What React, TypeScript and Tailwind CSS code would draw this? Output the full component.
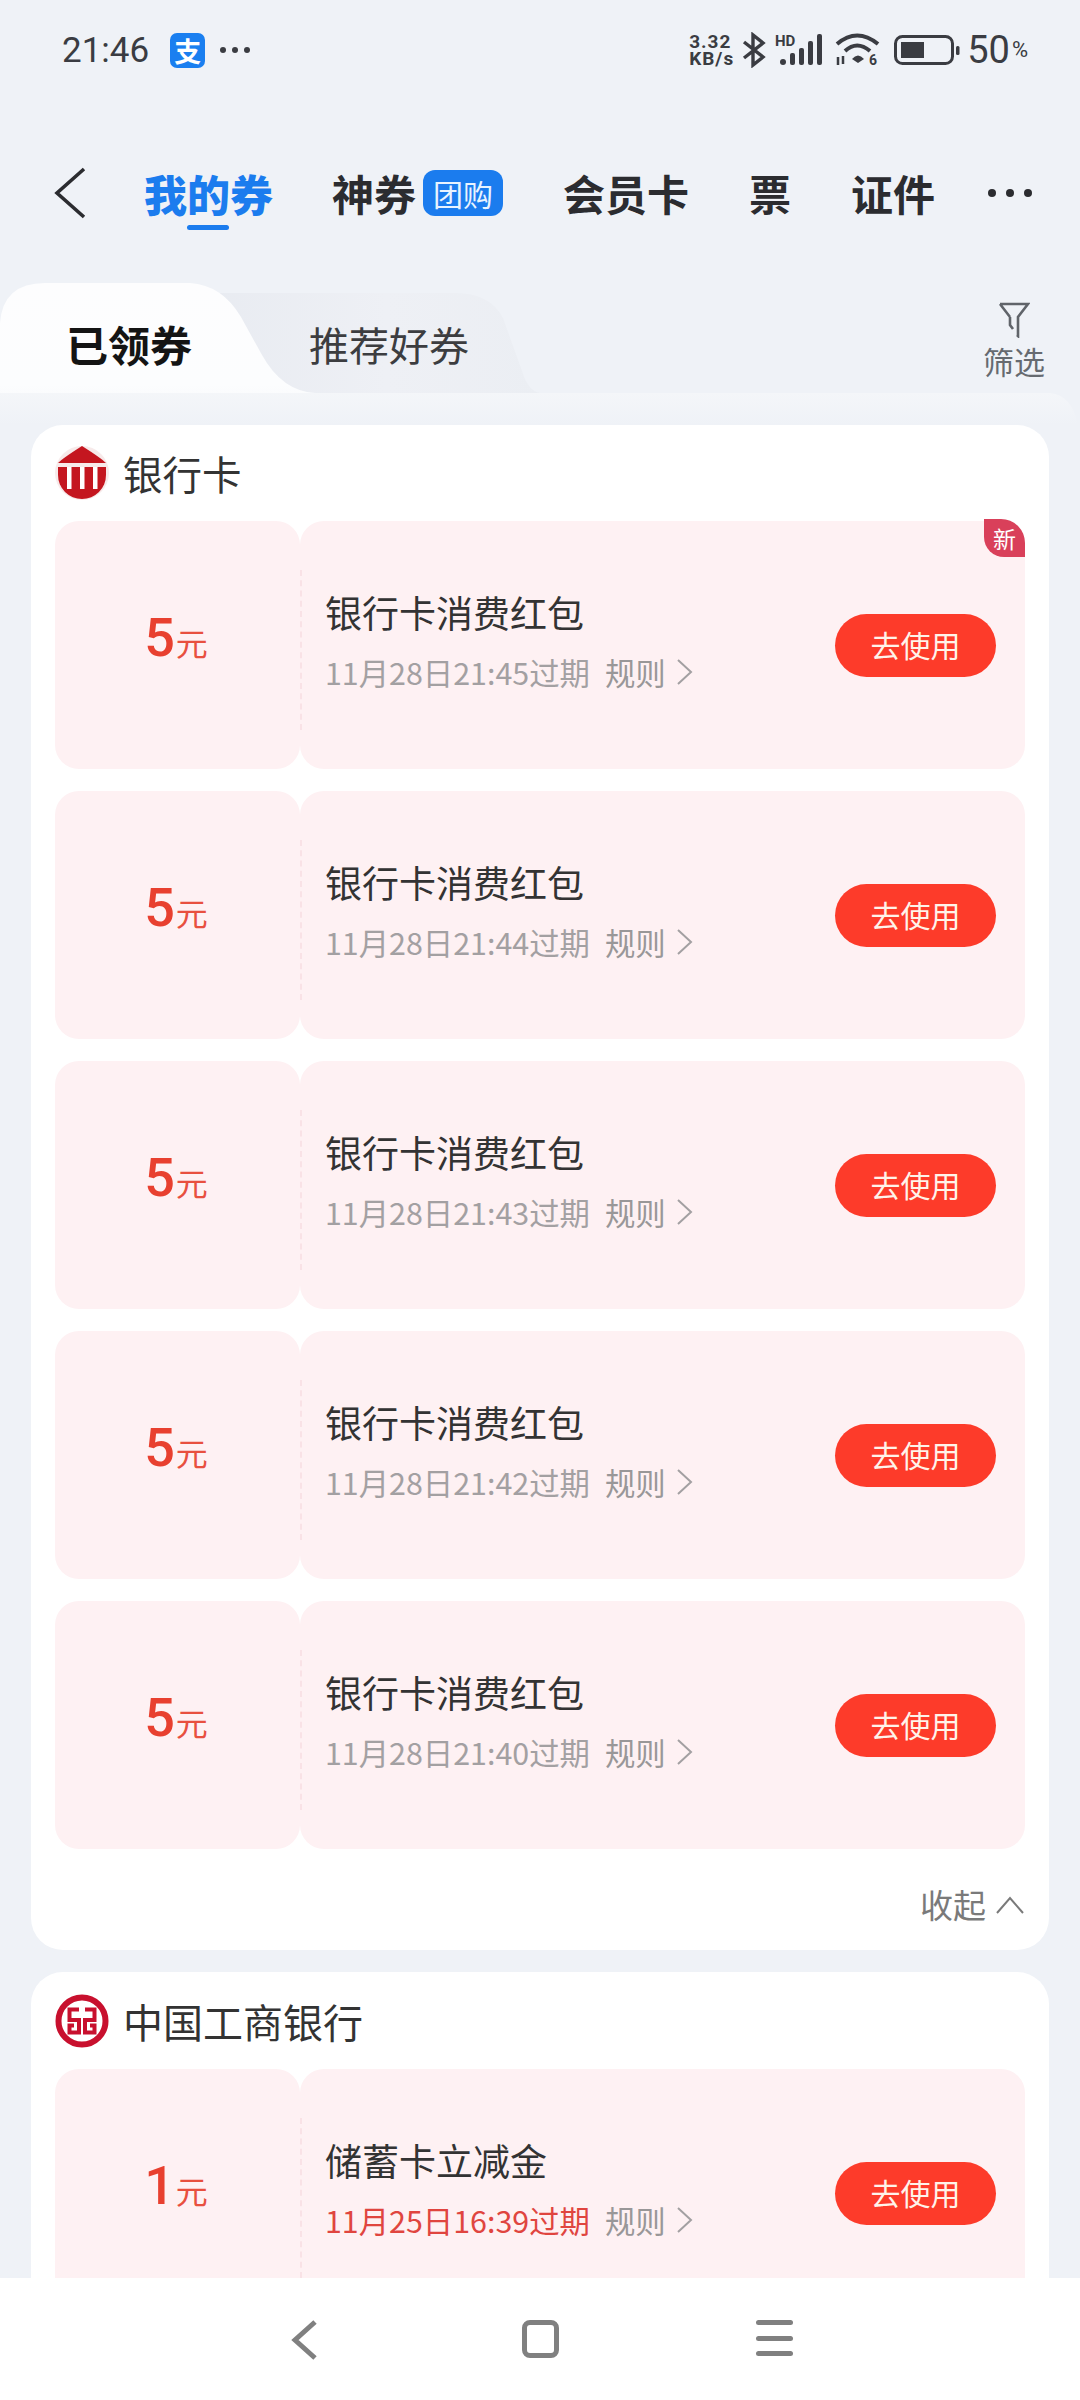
import React from "react";

function BankIcon() {
  return (
    <svg width="54" height="56" viewBox="0 0 54 56">
      <circle cx="27" cy="28" r="27" fill="#f7eaea" />
      <path d="M3 18 Q8 13 27 1 Q46 13 51 18 Z" fill="#c4161f" />
      <path d="M3 22 H51 V30 A24 24 0 0 1 3 30 Z" fill="#c4161f" />
      <rect x="12" y="22" width="4.5" height="22" fill="#ffffff" />
      <rect x="25" y="22" width="4.5" height="22" fill="#ffffff" />
      <rect x="38" y="22" width="4.5" height="22" fill="#ffffff" />
    </svg>
  );
}

function IcbcIcon() {
  return (
    <svg width="54" height="54" viewBox="0 0 54 54">
      <circle cx="27" cy="27" r="23.5" fill="none" stroke="#c8102e" strokeWidth="6" />
      <path
        d="M24 15.5H14.5V26H24V38.5H14.5V31.5H19M30 15.5H39.5V26H30V38.5H39.5V31.5H35"
        fill="none"
        stroke="#c8102e"
        strokeWidth="4"
      />
    </svg>
  );
}

function Coupon({
  amount,
  title,
  date,
  urgent,
  isNew,
}: {
  amount: string;
  title: string;
  date: string;
  urgent?: boolean;
  isNew?: boolean;
}) {
  return (
    <div className="relative flex h-[248px] shrink-0">
      <div className="flex w-[245px] items-baseline justify-center rounded-[24px] bg-[#fef1f3] pt-[87px] pr-[3px]">
        <span className="font-['Roboto',sans-serif] text-[54px] leading-[60px] font-medium text-[#e8402f]">{amount}</span>
        <span className="ml-[1px] text-[32px] leading-[60px] text-[#e8503f]">元</span>
      </div>
      <div className="relative flex flex-1 items-center rounded-[24px] bg-[#fef1f3] pr-[29px] pl-[25px]">
        <div className="absolute top-[49px] bottom-[39px] left-0 border-l-2 border-dashed border-[#f9e2e6]" />
        <div className="flex-1 pb-[11px]">
          <div className="text-[37px] leading-[50px] text-[#333333]">{title}</div>
          <div className="mt-[15px] flex items-center text-[30.4px] leading-[40px] text-[#a3a0a2]">
            <span className={urgent ? "text-[#e0453f]" : "text-[#a3a0a2]"}>{date}</span>
            <span className="ml-[15px] text-[#999798]">规则</span>
            <svg className="ml-[10px]" width="18" height="30" viewBox="0 0 18 30">
              <path d="M2 3 L15 15 L2 27" fill="none" stroke="#a3a0a2" strokeWidth="2" />
            </svg>
          </div>
        </div>
        <div className="flex h-[63px] w-[161px] items-center justify-center rounded-full bg-[#fd3b2a] pb-[2px] text-[30px] leading-none text-[#fff3ea]">
          去使用
        </div>
        {isNew && (
          <div className="absolute top-[-2px] right-0 flex h-[38px] w-[41px] items-center justify-center rounded-tr-[24px] rounded-bl-[20px] bg-[#d9405a] text-[23px] leading-none text-white">
            新
          </div>
        )}
      </div>
    </div>
  );
}

const rows = ["21:45", "21:44", "21:43", "21:42", "21:40"];

export default function App() {
  return (
    <div className="flex h-[2400px] w-[1080px] flex-col overflow-hidden bg-[#eff2f7] font-['Noto_Sans_CJK_SC','Noto_Sans',sans-serif]">
      {/* status bar */}
      <div className="flex h-[100px] shrink-0 items-center pr-[52px] pl-[62px] text-[#3a3c42]">
        <span className="font-['Roboto',sans-serif] text-[35px] leading-none">21:46</span>
        <div className="ml-[21px] flex h-[35px] w-[35px] items-center justify-center rounded-[7px] bg-[#1a7ff0] text-[27px] leading-none font-bold text-white">
          支
        </div>
        <svg className="ml-[14px]" width="32" height="8" viewBox="0 0 32 8">
          <circle cx="4" cy="4" r="3" fill="#3a3c42" />
          <circle cx="16" cy="4" r="3" fill="#3a3c42" />
          <circle cx="28" cy="4" r="3" fill="#3a3c42" />
        </svg>
        <div className="ml-auto flex flex-col font-['Roboto',sans-serif] text-[19px] leading-[17px] font-bold tracking-[1px]">
          <span>3.32</span>
          <span>KB/s</span>
        </div>
        <svg className="ml-[8px]" width="24" height="36" viewBox="0 0 24 36">
          <path d="M2 10 L21 25 L11 33 V3 L21 11 L2 26" fill="none" stroke="#3a3c42" strokeWidth="3.4" />
        </svg>
        <svg className="ml-[9px] overflow-visible" width="48" height="32" viewBox="0 0 48 32">
          <text x="0" y="12" fontSize="15" fontWeight="700" fontFamily="Roboto" fill="#3a3c42">HD</text>
          <rect x="5" y="25" width="6" height="6" rx="3" fill="#3a3c42" />
          <rect x="15" y="19" width="5" height="12" rx="2" fill="#3a3c42" />
          <rect x="24" y="14" width="5" height="17" rx="2" fill="#3a3c42" />
          <rect x="33" y="7" width="5" height="24" rx="2" fill="#3a3c42" />
          <rect x="42" y="0" width="5" height="31" rx="2" fill="#3a3c42" />
        </svg>
        <svg className="ml-[12px] overflow-visible" width="46" height="36" viewBox="0 0 46 36">
          <path d="M2 12 Q22 -5 43 12" fill="none" stroke="#3a3c42" strokeWidth="4" />
          <path d="M10 19 Q22 8 35 19" fill="none" stroke="#3a3c42" strokeWidth="4" />
          <path d="M17 27 Q23 20 29 27 L23 31 Z" fill="#3a3c42" />
          <path d="M3 25V33M8 24V32" stroke="#3a3c42" strokeWidth="2.5" />
          <text x="34" y="33" fontSize="14" fontWeight="700" fontFamily="Roboto" fill="#3a3c42">6</text>
        </svg>
        <svg className="ml-[13px]" width="66" height="30" viewBox="0 0 66 30">
          <rect x="1.5" y="1.5" width="57" height="27" rx="7" fill="none" stroke="#3a3c42" strokeWidth="3" />
          <rect x="7" y="7" width="23" height="16" fill="#3a3c42" />
          <rect x="62" y="11" width="3.5" height="9" rx="1.5" fill="#3a3c42" />
        </svg>
        <span className="ml-[7px] font-['Roboto',sans-serif] text-[38px] leading-none">50</span>
        <span className="ml-[2px] font-['Roboto',sans-serif] text-[22px] leading-none">%</span>
      </div>

      {/* top navigation */}
      <div className="flex h-[183px] shrink-0 items-center pt-[3px] pl-[54px] text-[42px] leading-none font-bold text-[#2b2c30]">
        <svg width="32" height="52" viewBox="0 0 32 52">
          <path d="M30 2 L3 26 L30 50" fill="none" stroke="#2b2c30" strokeWidth="3.6" />
        </svg>
        <div className="relative ml-[58px] text-[43px] font-black text-[#1b7cee]">
          我的券
          <div className="absolute top-[53px] left-[43px] h-[5px] w-[42px] rounded-full bg-[#1b7cee]" />
        </div>
        <span className="ml-[59px]">神券</span>
        <div className="ml-[7px] flex h-[46px] w-[80px] items-center justify-center rounded-[12px] bg-[#1b7cee] text-[30px] font-normal text-[#e8f3ff]">
          团购
        </div>
        <span className="ml-[60px]">会员卡</span>
        <span className="ml-[60px]">票</span>
        <span className="ml-[60px]">证件</span>
        <svg className="ml-[52px]" width="46" height="10" viewBox="0 0 46 10">
          <circle cx="5" cy="5" r="4" fill="#2b2c30" />
          <circle cx="23" cy="5" r="4" fill="#2b2c30" />
          <circle cx="41" cy="5" r="4" fill="#2b2c30" />
        </svg>
      </div>

      {/* coupon tabs */}
      <div className="relative flex h-[142px] shrink-0">
        <svg className="absolute inset-0" width="1080" height="142" viewBox="0 0 1080 142">
          <defs>
            <linearGradient id="panelFill" x1="0" y1="0" x2="0" y2="1">
              <stop offset="0" stopColor="#f4f6f9" />
              <stop offset="1" stopColor="#eff2f7" />
            </linearGradient>
            <linearGradient id="activeFill" x1="0" y1="0" x2="0" y2="1">
              <stop offset="0" stopColor="#fdfdfe" />
              <stop offset="0.72" stopColor="#fcfdfe" />
              <stop offset="1" stopColor="#f3f5f9" />
            </linearGradient>
            <linearGradient id="otherFill" x1="0" y1="0" x2="1" y2="0">
              <stop offset="0" stopColor="#e8ebf1" />
              <stop offset="0.55" stopColor="#eef0f5" />
              <stop offset="1" stopColor="#ebeef3" />
            </linearGradient>
          </defs>
          <path d="M200 110 V10 H455 Q490 10 503 35 L522 88 Q528 108 540 110 Z" fill="url(#otherFill)" />
          <path d="M0 110 H1050 Q1072 112 1078 142 H0 Z" fill="url(#panelFill)" />
          <path d="M0 142 V40 Q3 0 45 0 H190 Q222 2 241 34 L262 72 Q282 108 315 110 H0 Z" fill="url(#activeFill)" />
        </svg>
        <div className="relative flex w-full items-start pt-[37px] leading-[48px]">
          <span className="ml-[66px] text-[42px] font-bold text-[#141414]">已领券</span>
          <span className="ml-[117px] text-[40px] text-[#3c3d40]">推荐好券</span>
          <div className="ml-auto mr-[35px] -mt-[18px] flex flex-col items-center">
            <svg width="32" height="36" viewBox="0 0 32 36">
              <path d="M2 2 H30 L20 15 V34 L19 33 M12 15 L2 2 M12 15 V23 L15 27" fill="none" stroke="#60646a" strokeWidth="2.6" />
            </svg>
            <span className="mt-[3px] text-[31px] leading-[40px] text-[#666a70]">筛选</span>
          </div>
        </div>
      </div>

      {/* list */}
      <div className="flex min-h-0 flex-1 flex-col gap-[22px] overflow-hidden px-[31px]">
        <div className="flex shrink-0 flex-col rounded-[32px] bg-white px-[24px]">
          <div className="flex h-[96px] shrink-0 items-center pb-[1px]">
            <BankIcon />
            <span className="ml-[14px] text-[39.5px] leading-none text-[#333333]">银行卡</span>
          </div>
          <div className="flex flex-col gap-[22px]">
            {rows.map((t, i) => (
              <Coupon key={t} amount="5" title="银行卡消费红包" date={`11月28日${t}过期`} isNew={i === 0} />
            ))}
          </div>
          <div className="flex h-[101px] items-center justify-end pt-[10px] text-[33px] leading-none text-[#7a7a7a]">
            收起
            <svg className="ml-[9px]" width="30" height="20" viewBox="0 0 30 20">
              <path d="M2 18 L15 3 L28 18" fill="none" stroke="#7a7a7a" strokeWidth="2" />
            </svg>
          </div>
        </div>
        <div className="flex shrink-0 flex-col rounded-[32px] bg-white px-[24px]">
          <div className="flex h-[97px] shrink-0 items-center">
            <IcbcIcon />
            <span className="ml-[14px] text-[40px] leading-none text-[#333333]">中国工商银行</span>
          </div>
          <Coupon amount="1" title="储蓄卡立减金" date="11月25日16:39过期" urgent />
        </div>
      </div>

      {/* system navigation */}
      <div className="flex h-[122px] shrink-0 items-start bg-white pt-[42px]">
        <svg className="ml-[290px]" width="28" height="40" viewBox="0 0 28 40">
          <path d="M25 2 L5 20 L25 38" fill="none" stroke="#808080" strokeWidth="5" />
        </svg>
        <div className="ml-[204px] h-[38px] w-[37px] rounded-[8px] border-[5px] border-[#808080]" />
        <div className="ml-[197px] flex h-[36px] w-[37px] flex-col justify-between">
          <div className="h-[5px] rounded-full bg-[#808080]" />
          <div className="h-[5px] rounded-full bg-[#808080]" />
          <div className="h-[5px] rounded-full bg-[#808080]" />
        </div>
      </div>
    </div>
  );
}
